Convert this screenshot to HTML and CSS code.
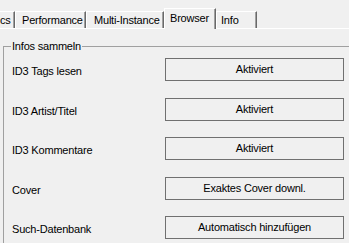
FILE: index.html
```html
<!DOCTYPE html>
<html lang="de">
<head>
    <meta charset="UTF-8">
    <title>Einstellungen - Browser</title>
    <link rel="stylesheet" href="styles.css">
</head>
<body>
<div class="tabs">
    <div class="tab tab-cut">cs</div>
    <div class="tab tab-perf">Performance</div>
    <div class="tab tab-multi">Multi-Instance</div>
    <div class="tab tab-browser active">Browser</div>
    <div class="tab tab-info">Info</div>
</div>

<div class="panel">
    <fieldset class="group">
        <legend>Infos sammeln</legend>
        <div class="rows">
            <div class="row">
                <span class="label">ID3 Tags lesen</span>
                <button class="btn">Aktiviert</button>
            </div>
            <div class="row">
                <span class="label">ID3 Artist/Titel</span>
                <button class="btn">Aktiviert</button>
            </div>
            <div class="row">
                <span class="label">ID3 Kommentare</span>
                <button class="btn">Aktiviert</button>
            </div>
            <div class="row">
                <span class="label">Cover</span>
                <button class="btn">Exaktes Cover downl.</button>
            </div>
            <div class="row">
                <span class="label">Such-Datenbank</span>
                <button class="btn">Automatisch hinzufügen</button>
            </div>
        </div>
    </fieldset>
</div>
</body>
</html>
```

FILE: styles.css
```css
html, body {
    margin: 0;
    height: 100%;
    overflow: hidden;
    background: #f0f0f0;
}

body {
    font-family: "Liberation Sans", Arial, sans-serif;
    font-size: 11px;
    line-height: 13px;
    letter-spacing: -0.2px;
    color: #000;
}

/* tab strip */
.tabs {
    display: flex;
    align-items: flex-end;
    height: 28px;
}

.tab {
    box-sizing: border-box;
    height: 17px;
    padding: 2px 0 0 6px;
    border-top: 1px solid #fff;
    border-left: 1px solid #fff;
    border-right: 1px solid #696969;
    box-shadow: inset -1px 0 #a0a0a0;
    white-space: nowrap;
    overflow: hidden;
}

.tab-cut {
    width: 15px;
    padding-left: 0;
    border-left: 0;
}

.tab-perf {
    width: 71px;
}

.tab-multi {
    width: 78px;
    padding-left: 7px;
}

.tab-browser {
    width: 52px;
    padding-left: 5px;
}

.tab-info {
    width: 41px;
    padding-left: 4px;
}

.tab.active {
    position: relative;
    height: 21px;
    padding-top: 3px;
    margin-bottom: -1px; /* covers the panel edge */
    background: #f0f0f0;
}

/* page under the tabs */
.panel {
    border-top: 1px solid #fff;
    padding: 11px 0 0 3px;
}

.group {
    margin: 0 -40px 0 0;
    padding: 5px 0 40px 8px;
    border: 1px solid #a0a0a0;
    min-width: 0;
}

.group legend {
    margin-left: -1px;
    padding: 0 1px;
    line-height: 13px;
}

.rows {
    display: flex;
    flex-direction: column;
    gap: 16.5px;
}

.row {
    display: grid;
    grid-template-columns: 153px 179px;
    height: 23px;
}

.label {
    padding-top: 7px;
}

.btn {
    box-sizing: border-box;
    height: 23px;
    padding: 0;
    border: 1px solid #707070;
    background: #f0f0f0;
    color: #000;
    font: inherit;
    letter-spacing: inherit;
}
```
